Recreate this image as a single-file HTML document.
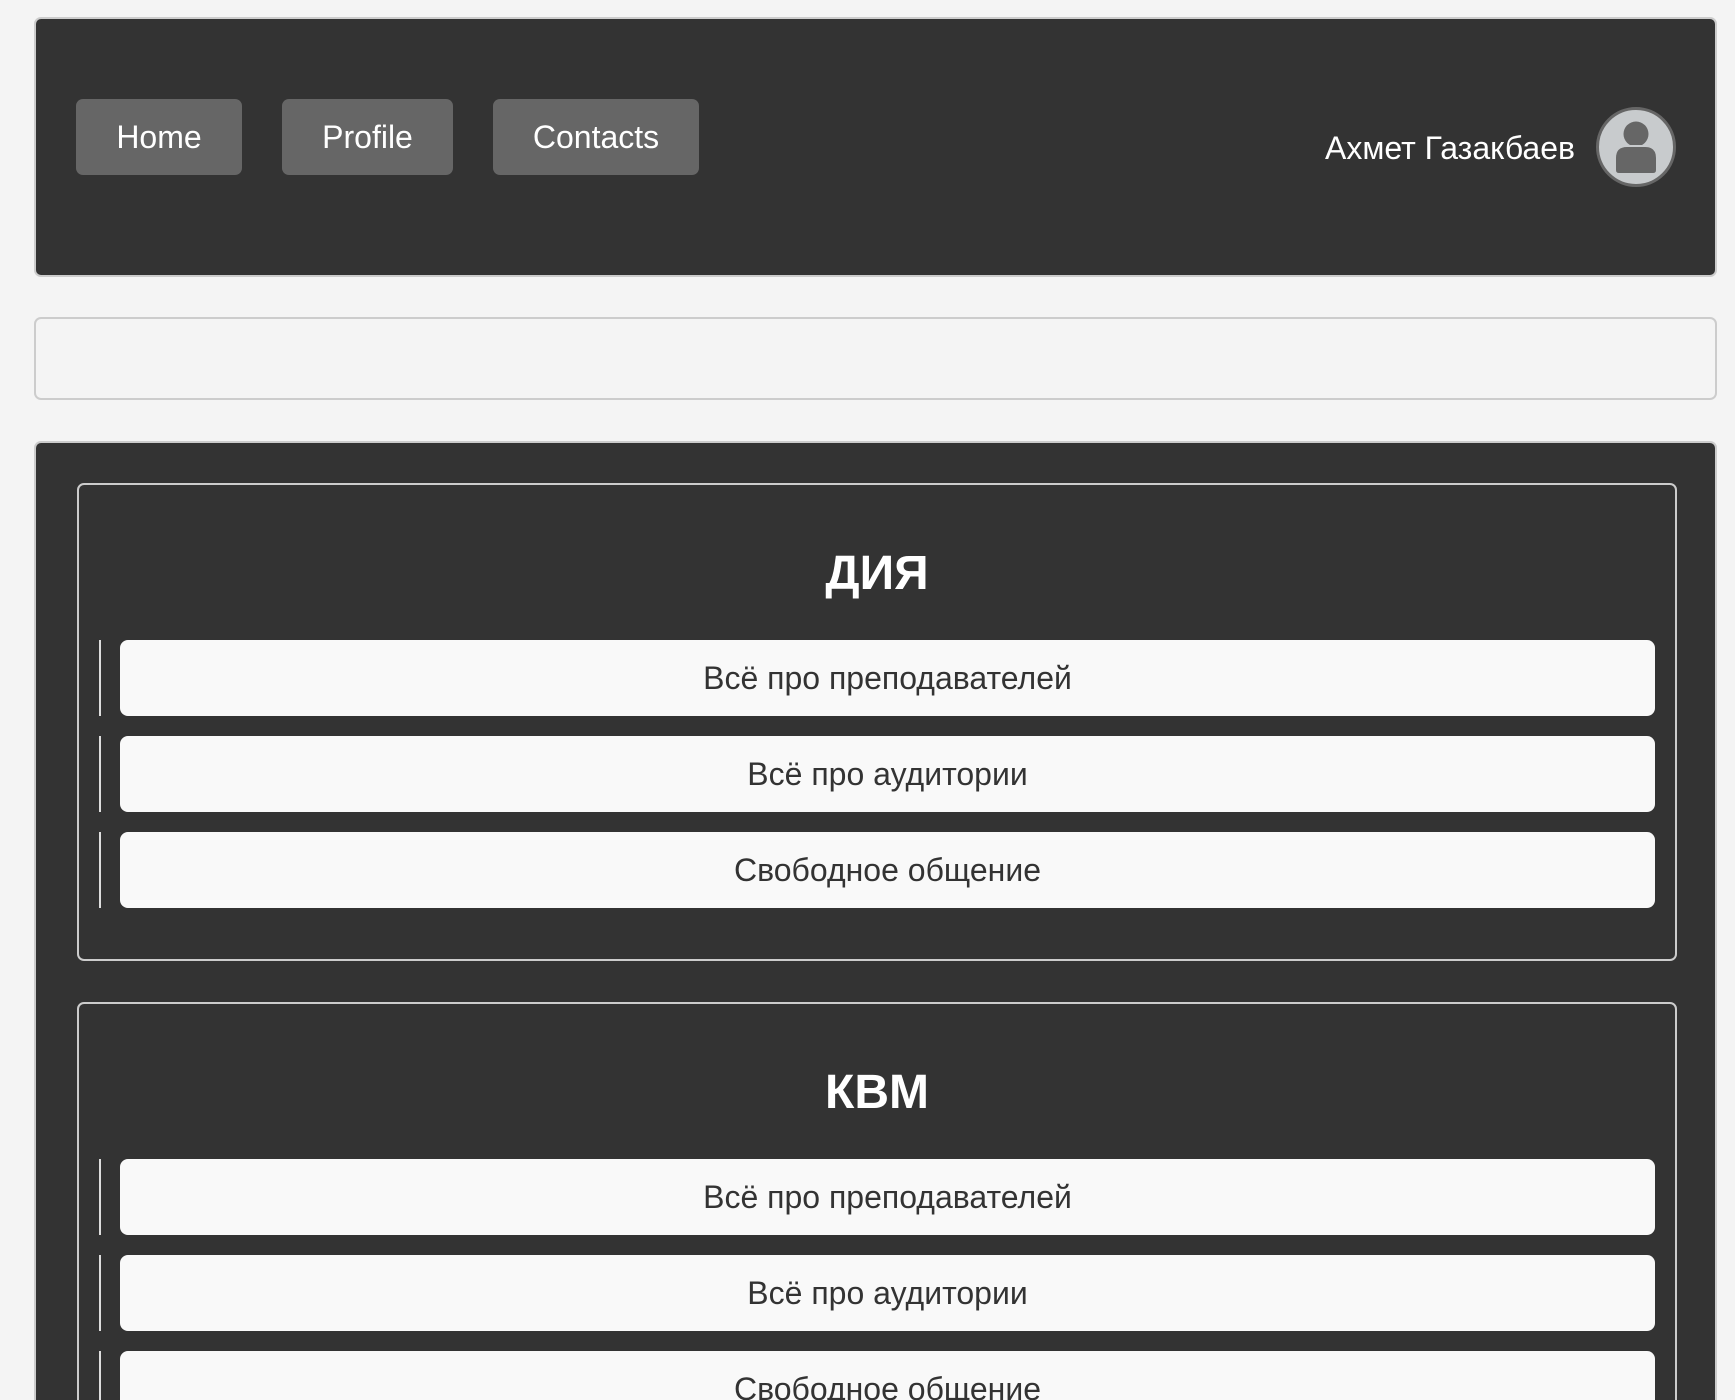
<!DOCTYPE html>
<html><head><meta charset="utf-8"><style>
*{box-sizing:border-box;margin:0;padding:0}
html,body{width:1735px;height:1400px;overflow:hidden;background:#f4f4f4;font-family:"Liberation Sans","DejaVu Sans",sans-serif}
#wrap{position:relative;width:1735px;height:1400px;overflow:hidden}
.hdr{position:absolute;left:34px;top:17px;width:1683px;height:260px;background:#333;border:2px solid #ccc;border-radius:7px}
.btn{position:absolute;top:80px;height:76px;background:#666;color:#fff;border-radius:7px;font-size:32px;line-height:76px;text-align:center}
.name{position:absolute;right:140px;top:109px;color:#fff;font-size:32px;line-height:40px}
.av{position:absolute;left:1596px;top:107px;width:80px;height:80px;border-radius:50%;background:#c8cbcd;border:3px solid #666;overflow:hidden}
.grey{position:absolute;left:34px;top:317px;width:1683px;height:83px;border:2px solid #ccc;border-radius:7px;background:#f4f4f4}
.main{position:absolute;left:34px;top:441px;width:1683px;height:959px;background:#333;border:2px solid #ccc;border-bottom:none;border-radius:7px 7px 0 0;overflow:hidden}
.card{position:absolute;left:41px;width:1600px;height:478px;border:2px solid #ccc;border-radius:7px}
.card h2{position:absolute;left:0;right:0;top:59px;text-align:center;color:#fff;font-size:48px;font-weight:bold;line-height:60px}
.line{position:absolute;left:20px;width:2px;height:76px;background:#ddd}
.item{position:absolute;left:41px;width:1535px;height:76px;background:#f9f9f9;border-radius:8px;color:#333;font-size:32px;line-height:76px;text-align:center}
</style></head><body><div id="wrap">
<div class="hdr">
 <div class="btn" style="left:40px;width:166px">Home</div>
 <div class="btn" style="left:246px;width:171px">Profile</div>
 <div class="btn" style="left:457px;width:206px">Contacts</div>
 <div class="name">Ахмет Газакбаев</div>
</div>
<div class="av"><svg width="74" height="74" viewBox="0 0 74 74"><circle cx="37" cy="24" r="12.5" fill="#666"/><path d="M16 48 Q16 36 28 36 L46 36 Q58 36 58 48 L58 60 Q58 64 54 64 L20 64 Q16 64 16 60 Z" fill="#666" stroke="#c8cbcd" stroke-width="2"/></svg></div>
<div class="grey"></div>
<div class="main">
 <div class="card" style="top:40px">
  <h2>ДИЯ</h2>
  <div class="line" style="top:155px"></div><div class="item" style="top:155px">Всё про преподавателей</div>
  <div class="line" style="top:251px"></div><div class="item" style="top:251px">Всё про аудитории</div>
  <div class="line" style="top:347px"></div><div class="item" style="top:347px">Свободное общение</div>
 </div>
 <div class="card" style="top:559px">
  <h2>КВМ</h2>
  <div class="line" style="top:155px"></div><div class="item" style="top:155px">Всё про преподавателей</div>
  <div class="line" style="top:251px"></div><div class="item" style="top:251px">Всё про аудитории</div>
  <div class="line" style="top:347px"></div><div class="item" style="top:347px">Свободное общение</div>
 </div>
</div>
</div></body></html>
